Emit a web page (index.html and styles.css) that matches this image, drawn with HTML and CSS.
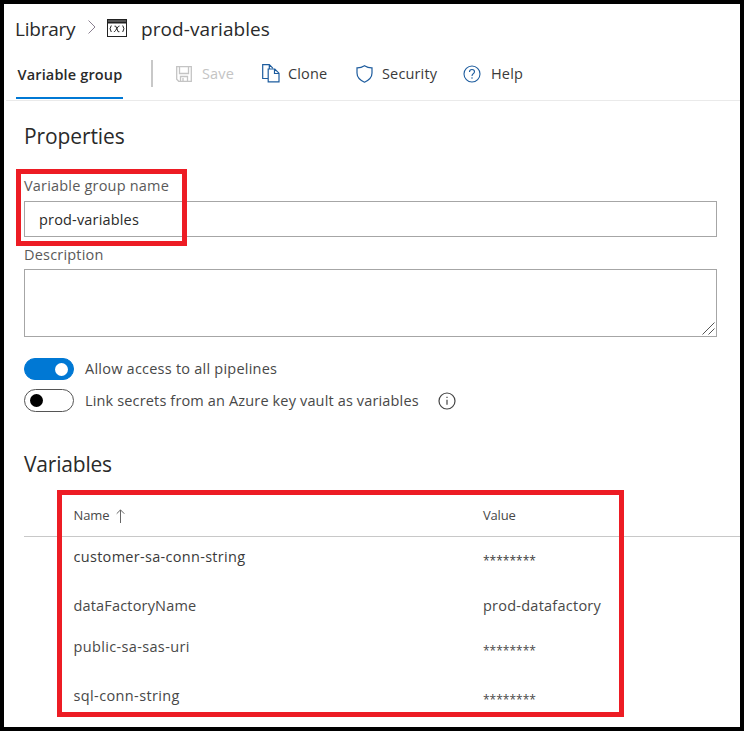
FILE: index.html
```html
<!DOCTYPE html>
<html lang="en">
<head>
<meta charset="utf-8">
<title>Library - prod-variables</title>
<link rel="stylesheet" href="styles.css">
</head>
<body>
<div class="page">
  <header class="breadcrumb">
    <span class="crumb">Library</span>
    <svg class="chevron" width="8" height="16" viewBox="0 0 8 16"><path d="M.5 1.5 7 8 .5 14.5" fill="none" stroke="#8a8090"/></svg>
    <svg class="group-icon" width="20" height="18" viewBox="0 0 20 18">
      <path d="M0 0h20v18H0z" fill="#222"/><path d="M1 1h18v2H1z" fill="#555"/><path d="M1 4.500h18V17H1z" fill="#fff"/>
      <path d="M4.300 6.500q-2.500 3.200 0 6.500M15.700 6.500q2.500 3.200 0 6.500M7.500 7.200h1.300l2.300 5.500h1.300M12.500 7q-1 0-1.600 1l-2.400 3.500q-.7 1.300-1.600 1.200" fill="none" stroke="#222"/>
    </svg>
    <span class="crumb current">prod-variables</span>
  </header>
  <nav class="toolbar">
    <div class="tab"><span class="t-tab">Variable group</span></div>
    <i class="divider"></i>
    <div class="cmd save">
      <svg width="16" height="16" viewBox="0 0 16 16" fill="none" stroke="#c4c4c4" stroke-width="1.300"><path d="M.7.700h14.600v14.600H2.700l-2-2zM3.500.700v6.800h9V.700M4.500 15v-4.500h7V15M7 12v3"/></svg>
      <span class="t-save">Save</span>
    </div>
    <div class="cmd clone">
      <svg width="18" height="19" viewBox="0 0 18 19" fill="none" stroke="#1d5c9e" stroke-width="1.200"><path d="M6 14.500H.700V.700h6.600l3.500 3.500M6.200 5h6.600l4.200 4.200v8.700H6.200zM12.500 5v4.500H17M7.300.700V4.500"/></svg>
      <span class="t-clone">Clone</span>
    </div>
    <div class="cmd security">
      <svg width="17" height="18" viewBox="0 0 17 18" fill="none" stroke="#1d5c9e" stroke-width="1.200"><path d="M8.500.800Q12 3 16 2.900V8q0 5.800-7.500 9.200Q1 13.800 1 8V2.900Q5 3 8.500.800z"/></svg>
      <span class="t-security">Security</span>
    </div>
    <div class="cmd help">
      <svg width="18" height="18" viewBox="0 0 18 18" fill="none" stroke="#1d5c9e" stroke-width="1.100"><circle cx="9" cy="9" r="8"/><path d="M6.500 6.900q0-2.400 2.500-2.400t2.500 2.200q0 1.200-1.300 2Q9 9.500 9 11M9 12.300v1.500"/></svg>
      <span class="t-help">Help</span>
    </div>
  </nav>
  <main>
    <h2 class="properties-title"><span>Properties</span></h2>
    <section class="field name-field">
      <label><span class="t-label">Variable group name</span></label>
      <div class="textbox"><span class="t-input">prod-variables</span></div>
      <div class="highlight name-highlight"></div>
    </section>
    <section class="field">
      <label class="description-label"><span class="t-label">Description</span></label>
      <div class="textarea">
        <svg width="13" height="13" viewBox="0 0 13 13" stroke="#555" fill="none"><path d="M.500 12.500l12-12M6.500 12.500l6-6"/></svg>
      </div>
    </section>
    <div class="switch-row">
      <i class="switch on"></i><span class="t-allow">Allow access to all pipelines</span>
    </div>
    <div class="switch-row second">
      <i class="switch"></i><span class="t-link">Link secrets from an Azure key vault as variables</span>
      <svg width="18" height="18" viewBox="0 0 18 18" fill="none" stroke="#444" stroke-width="1.200"><circle cx="9" cy="9" r="8"/><path d="M9 7.800v5M9 4.700v1.400"/></svg>
    </div>
    <h2 class="variables-title"><span>Variables</span></h2>
    <section class="table">
      <div class="row head">
        <div class="name"><span class="t-name">Name</span><svg width="9" height="14" viewBox="0 0 9 14" fill="none" stroke="#666"><path d="M4.500 14V1M.700 4.700 4.500.900l3.800 3.800"/></svg></div>
        <div><span class="t-value">Value</span></div>
      </div>
      <div class="row r1"><div class="name"><span class="t-customer">customer-sa-conn-string</span></div><div class="secret"><span>********</span></div></div>
      <div class="row r2"><div class="name"><span class="t-factory">dataFactoryName</span></div><div><span class="t-datafactory">prod-datafactory</span></div></div>
      <div class="row r3"><div class="name"><span class="t-public">public-sa-sas-uri</span></div><div class="secret"><span>********</span></div></div>
      <div class="row r4"><div class="name"><span class="t-sql">sql-conn-string</span></div><div class="secret"><span>********</span></div></div>
      <div class="highlight table-highlight"></div>
    </section>
  </main>
</div>
</body>
</html>
```
FILE: styles.css
```css
* { box-sizing: border-box; }
body { margin: 0; font: 14.5px/20px "Open Sans", "Noto Sans", sans-serif; color: #484848; }
.page { width: 744px; height: 731px; border: 4px solid #000; background: #fff; overflow: hidden; }
svg { display: block; flex: none; }
span { white-space: nowrap; }

.breadcrumb { display: flex; align-items: center; height: 46px; padding: 3px 0 0 11px; color: #2a2a2a; }
.crumb { font-size: 19px; line-height: 26px; width: 61px; letter-spacing: -0.22px; }
.chevron { margin-left: 12px; margin-top: -3px; }
.group-icon { margin-left: 11px; margin-top: -1px; }
.current { margin-left: 14px; letter-spacing: 0.08px; }

.toolbar { display: flex; align-items: center; height: 51px; margin-left: 2px; padding-left: 10px; border-bottom: 1px solid #eaeaea; }
.tab { width: 107px; height: 49px; margin-top: -1px; padding: 15px 0 0 1.5px; border-bottom: 2px solid #0078d4; font-weight: 600; letter-spacing: 0.15px; color: #2a2a2a; }
.divider { width: 2px; height: 27px; margin: -3px 23px 0 28px; background: #c8c8c8; }
.cmd { display: flex; align-items: center; height: 20px; margin-top: -3px; letter-spacing: 0.15px; color: #3a3a3a; }
.save { width: 86px; gap: 10px; color: #c4c4c4; }
.clone { width: 94px; gap: 8px; }
.security { width: 107px; gap: 9px; }
.help { gap: 10px; }

main { padding-left: 20px; }
h2 { margin: 0; font-size: 21px; line-height: 30px; font-weight: 400; letter-spacing: -0.1px; color: #2a2a2a; }
.properties-title { height: 75px; padding-top: 20px; }
.field { position: relative; width: 693px; }
label { display: block; height: 25px; color: #5a5a5a; }
.textbox { height: 36px; padding: 8px 0 0 14px; border: 1px solid #a6a6a6; color: #2a2a2a; }
.description-label { height: 32px; padding-top: 8px; }
.textarea { display: flex; justify-content: flex-end; align-items: flex-end; height: 68px; padding: 1px; border: 1px solid #a6a6a6; }
.highlight { position: absolute; border: 5px solid #ed1c24; }
.name-highlight { left: -8px; top: -7px; width: 171px; height: 77px; }

.switch-row { display: flex; align-items: center; height: 22px; margin-top: 21px; }
.switch-row.second { height: 23px; margin-top: 9px; }
.switch-row svg { margin-left: 19px; margin-top: 1px; }
.switch { display: flex; align-items: center; width: 50px; height: 23px; margin-right: 11px; padding-left: 5px; border: 1px solid #555; border-radius: 12px; }
.switch::after { content: ""; width: 13px; height: 13px; border-radius: 50%; background: #000; }
.switch.on { height: 22px; padding-left: 30px; border-color: #0078d4; background: #0078d4; }
.switch.on::after { background: #fff; }

.variables-title { height: 83px; padding-top: 37px; letter-spacing: -0.2px; }
.table { position: relative; }
.row { display: grid; grid-template-columns: 409.5px 1fr; padding-left: 49.5px; }
.head { height: 42px; padding-top: 10px; border-bottom: 1px solid #c8c8c8; font-size: 13px; }
.name { display: flex; align-items: flex-start; }
.head svg { margin: 4px 0 0 6.5px; }
.r1 { height: 49px; padding-top: 10px; color: #3a3a3a; }
.r2 { height: 41px; padding-top: 10px; }
.r3 { height: 49px; padding-top: 10px; }
.r4 { height: 40px; padding-top: 10px; }
.secret { padding-top: 4px; font-size: 12px; }
.table-highlight { left: 33px; top: -5px; width: 567px; height: 227px; }

.t-label { letter-spacing: 0.19px; }
.t-input { letter-spacing: 0.17px; }
.t-allow { letter-spacing: 0.23px; }
.t-link { letter-spacing: 0.15px; }
.t-value { letter-spacing: -0.2px; }
.t-name { letter-spacing: -0.1px; }
.t-customer { letter-spacing: 0.3px; }
.t-factory { letter-spacing: 0.17px; }
.t-datafactory { letter-spacing: 0.24px; }
.t-public { letter-spacing: 0.35px; }
.t-sql { letter-spacing: 0.38px; }
```
